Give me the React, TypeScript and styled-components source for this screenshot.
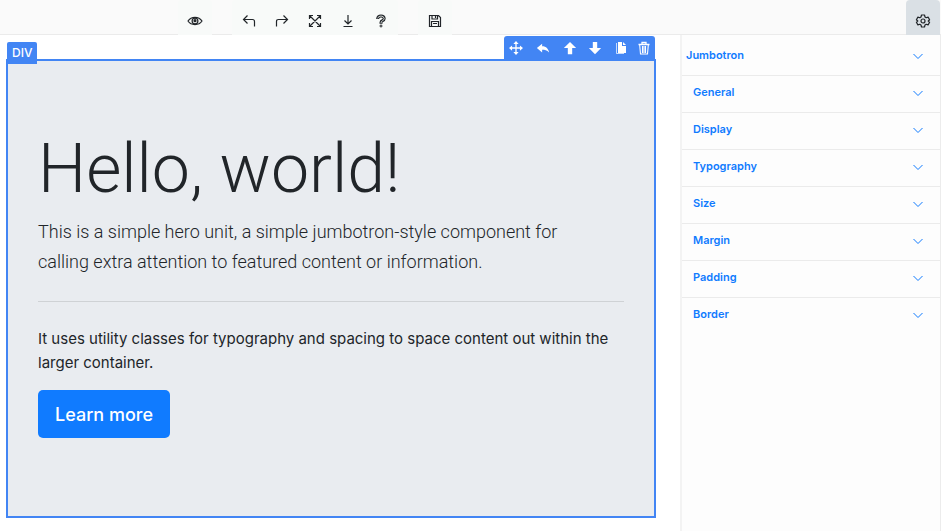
import React from "react";
import styled, { createGlobalStyle } from "styled-components";

const Global = createGlobalStyle`
  * { box-sizing: border-box; }
  body {
    margin: 0;
    background: #fff;
    color: #212529;
    font-family: Inter, "Liberation Sans", sans-serif;
    font-size: 16px;
    line-height: 24px;
  }
  button { font-family: inherit; border: 0; padding: 0; cursor: pointer; }
  h1, h2, p { margin: 0; }
`;

const Page = styled.div`
  display: flex;
  flex-direction: column;
  min-height: 100vh;
  padding-right: 3px;
`;

const TopBar = styled.header`
  display: flex;
  gap: 20px;
  height: 35px;
  padding-left: 178px;
  background: #fafafa;
  box-shadow: inset 0 -1px #ebebeb;
`;

const ToolGroup = styled.div`
  display: flex;
  padding-right: 1px;
  background: #f8faf9;
  border-radius: 4px 4px 0 0;
`;

const ToolButton = styled.button<{ $active?: boolean }>`
  display: flex;
  justify-content: center;
  width: ${(p) => (p.$active ? 34 : 33)}px;
  height: 35px;
  padding-top: 13px;
  color: #212529;
  background: ${(p) => (p.$active ? "#dae0e5" : "transparent")};
  border-radius: 4px 4px 0 0;
`;

const EndSlot = styled.div`
  margin-left: auto;
  padding-right: 1px;
`;

const Icon = styled.svg<{ $size?: number }>`
  display: block;
  flex: none;
  width: ${(p) => p.$size ?? 16}px;
  height: ${(p) => p.$size ?? 16}px;
  fill: none;
  stroke: currentColor;
`;

const Body = styled.main`
  display: flex;
  flex: 1;
`;

const Canvas = styled.section`
  flex: 1;
  min-width: 0;
  padding: 24px 24px 13px 6px;
`;

const Selection = styled.div`
  position: relative;
  border: 2px solid #4285f4;
`;

const ElementTag = styled.span`
  position: absolute;
  left: -1px;
  top: -19px;
  height: 22px;
  padding: 0 5px;
  background: #4285f4;
  border-radius: 2px 2px 0 0;
  color: #fff;
  font-size: 12px;
  font-weight: 500;
  line-height: 22px;
`;

const ActionBar = styled.div`
  position: absolute;
  right: -1px;
  top: -25px;
  display: flex;
  height: 25px;
  background: #4285f4;
  border-radius: 3px 3px 0 0;
`;

const ActionButton = styled.button<{ $width: number }>`
  display: flex;
  align-items: center;
  justify-content: center;
  width: ${(p) => p.$width}px;
  padding-bottom: 1px;
  background: transparent;
  color: #fff;
`;

const Jumbotron = styled.div`
  padding: 62px 30px 78px;
  background: #e9ecf0;
`;

const Title = styled.h1`
  margin-bottom: 2px;
  font-family: Roboto, Inter, sans-serif;
  font-size: 68px;
  font-weight: 350;
  line-height: 92px;
`;

const Lead = styled.p`
  font-family: Roboto, Inter, sans-serif;
  font-size: 18px;
  font-weight: 300;
  line-height: 30px;
`;

const Divider = styled.hr`
  height: 1px;
  margin: 24px 0 25px;
  border: 0;
  background: #cfd2d5;
`;

const Copy = styled.p`
  margin-bottom: 15px;
  font-size: 15px;
`;

const LearnMore = styled.a`
  display: inline-block;
  padding: 10px 17px 8px;
  border-radius: 5px;
  background: #107bff;
  color: #fff;
  font-size: 18px;
  font-weight: 500;
  line-height: 30px;
  text-decoration: none;
  vertical-align: top;
`;

const Panel = styled.aside`
  width: 261px;
  border-left: 2px solid #f3f3f3;
  border-right: 1px solid #ececec;
  background: #fdfdfd;
`;

const Section = styled.h2<{ $nested?: boolean }>`
  padding-left: ${(p) => (p.$nested ? 11 : 4)}px;
  border-bottom: 1px solid #ebebeb;
  font-size: 11px;
  line-height: 16px;

  &:last-child { border-bottom: 0; }
`;

const SectionToggle = styled.button<{ $nested?: boolean }>`
  display: flex;
  align-items: center;
  justify-content: space-between;
  width: 100%;
  height: ${(p) => (p.$nested ? 36 : 40)}px;
  padding: 0 16px ${(p) => (p.$nested ? 4 : 0)}px 0;
  background: transparent;
  color: #107bff;
  font-size: 11px;
  font-weight: 600;
  line-height: 16px;

  svg { margin-top: 2px; }
`;

const EyeIcon = () => (
  <Icon viewBox="0 0 16 16" strokeWidth="1.2">
    <path d="M1 8C4.300 3.200 11.700 3.200 15 8C11.700 12.800 4.300 12.800 1 8Z" />
    <circle cx="8" cy="8" r="2.900" />
    <circle cx="8" cy="7.700" r="1" fill="currentColor" />
  </Icon>
);
const UndoIcon = () => (
  <Icon viewBox="0 0 16 16" strokeWidth="1.200">
    <path d="M6.500 2.500L2.500 6.500L6.500 10.500M2.500 6.500H11.500Q13.500 6.500 13.500 8.500V13.500" />
  </Icon>
);
const RedoIcon = () => (
  <Icon viewBox="0 0 16 16" strokeWidth="1.200">
    <path d="M9.500 2.500L13.500 6.500L9.500 10.500M13.500 6.500H4.500Q2.500 6.500 2.500 8.500V13.500" />
  </Icon>
);
const ExpandIcon = () => (
  <Icon viewBox="0 0 16 16" strokeWidth="1.200">
    <path d="M2.500 6V2.500H6M10 2.500H13.500V6M13.500 10V13.500H10M6 13.500H2.500V10M2.500 2.500L13.500 13.500M13.500 2.500L2.500 13.500" />
  </Icon>
);
const DownloadIcon = () => (
  <Icon viewBox="0 0 16 16" strokeWidth="1.200">
    <path d="M8 2V11M4.500 7.500L8 11L11.500 7.500M3.500 13.500H12.500" />
  </Icon>
);
const HelpIcon = () => (
  <Icon viewBox="0 0 16 16">
    <path d="M4.700 6V5.500Q5 3 8 3T11.200 5.500Q11.200 6.900 9.500 7.700Q8 8.400 8 9.500V10.800" strokeWidth="3" />
    <path d="M4.700 5.400Q5.200 3 8 3T11.200 5.500Q11.200 6.900 9.500 7.700Q8 8.400 8 10" stroke="#f8faf9" strokeWidth="0.800" />
    <circle cx="8" cy="13" r="1" strokeWidth="1" />
  </Icon>
);
const SaveIcon = () => (
  <Icon viewBox="0 0 16 16" strokeWidth="1.200">
    <path d="M2.500 2.500H11.500L13.500 4.500V13.500H2.500ZM5 2.500V6H10.500V2.500M4.500 13.500V8.500H11.500V13.500M8.500 3V5M6 10.500H10" />
  </Icon>
);
const GearIcon = () => (
  <Icon viewBox="0 0 16 16" strokeWidth="1.200" strokeLinejoin="round">
    <path d="M6.500 2H9.500L10 4L11.200 4.700L13.100 4.100L14.600 6.700L13.200 8L14.600 9.300L13.100 11.900L11.200 11.300L10 12L9.500 14H6.500L6 12L4.800 11.300L2.900 11.900L1.400 9.300L2.800 8L1.400 6.700L2.900 4.100L4.800 4.700L6 4Z" />
    <circle cx="8" cy="8" r="2" />
  </Icon>
);

const MoveIcon = () => (
  <Icon viewBox="0 0 16 16" $size={14} strokeWidth="1.500">
    <path d="M8 2V14M2 8H14" />
    <path d="M8 0L11 3.500H5ZM8 16L5 12.500H11ZM0 8L3.500 5V11ZM16 8L12.500 11V5Z" fill="currentColor" stroke="none" />
  </Icon>
);
const ReplyIcon = () => (
  <Icon viewBox="0 0 16 16" $size={14}>
    <path d="M7 3V6C12 6 14 9 15 13C12.500 10.500 10 10 7 10V13L1 8Z" fill="currentColor" stroke="none" />
  </Icon>
);
const UpIcon = () => (
  <Icon viewBox="0 0 16 16" $size={14}>
    <path d="M8 1L15 8H10.500V15H5.500V8H1Z" fill="currentColor" stroke="none" />
  </Icon>
);
const DownIcon = () => (
  <Icon viewBox="0 0 16 16" $size={14}>
    <path d="M8 15L15 8H10.500V1H5.500V8H1Z" fill="currentColor" stroke="none" />
  </Icon>
);
const CopyIcon = () => (
  <Icon viewBox="0 0 14 14" $size={14}>
    <path d="M4 1H8V5H12V12H4Z" fill="currentColor" stroke="none" />
    <path d="M9 1L12 4H9Z" fill="currentColor" stroke="none" />
    <path d="M2.500 2V12.500H10" strokeWidth="1" opacity="0.700" />
  </Icon>
);
const TrashIcon = () => (
  <Icon viewBox="0 0 14 14" $size={14}>
    <path d="M1.500 3.500H12.500M5 3V1.500H9V3" strokeWidth="1.300" />
    <path d="M2.700 4L3.500 13H10.500L11.300 4M5.500 5V12M7 5V12M8.500 5V12" strokeWidth="1.100" />
  </Icon>
);
const ChevronIcon = () => (
  <Icon viewBox="0 0 12 12" $size={12} strokeWidth="1">
    <path d="M1.500 4L6 8.500L10.500 4" />
  </Icon>
);

const toolGroups = [
  [{ label: "Preview", Glyph: EyeIcon }],
  [
    { label: "Undo", Glyph: UndoIcon },
    { label: "Redo", Glyph: RedoIcon },
    { label: "Fullscreen", Glyph: ExpandIcon },
    { label: "Download", Glyph: DownloadIcon },
    { label: "Help", Glyph: HelpIcon },
  ],
  [{ label: "Save", Glyph: SaveIcon }],
];

const actions = [
  { label: "Move", Glyph: MoveIcon, width: 24 },
  { label: "Select parent", Glyph: ReplyIcon, width: 29 },
  { label: "Move up", Glyph: UpIcon, width: 25 },
  { label: "Move down", Glyph: DownIcon, width: 26 },
  { label: "Clone", Glyph: CopyIcon, width: 25 },
  { label: "Delete", Glyph: TrashIcon, width: 22 },
];

const sections = ["General", "Display", "Typography", "Size", "Margin", "Padding", "Border"];

export default function App() {
  return (
    <Page>
      <Global />
      <TopBar>
        {toolGroups.map((group) => (
          <ToolGroup key={group[0].label}>
            {group.map(({ label, Glyph }) => (
              <ToolButton key={label} type="button" aria-label={label}>
                <Glyph />
              </ToolButton>
            ))}
          </ToolGroup>
        ))}
        <EndSlot>
          <ToolButton type="button" aria-label="Settings" $active>
            <GearIcon />
          </ToolButton>
        </EndSlot>
      </TopBar>
      <Body>
        <Canvas>
          <Selection>
            <ElementTag>DIV</ElementTag>
            <ActionBar>
              {actions.map(({ label, Glyph, width }) => (
                <ActionButton key={label} type="button" aria-label={label} $width={width}>
                  <Glyph />
                </ActionButton>
              ))}
            </ActionBar>
            <Jumbotron>
              <Title>Hello, world!</Title>
              <Lead>
                This is a simple hero unit, a simple jumbotron-style component for
                <br />
                calling extra attention to featured content or information.
              </Lead>
              <Divider />
              <Copy>
                It uses utility classes for typography and spacing to space content out within the
                larger container.
              </Copy>
              <LearnMore href="#">Learn more</LearnMore>
            </Jumbotron>
          </Selection>
        </Canvas>
        <Panel>
          <Section>
            <SectionToggle type="button">
              Jumbotron
              <ChevronIcon />
            </SectionToggle>
          </Section>
          {sections.map((name) => (
            <Section key={name} $nested>
              <SectionToggle type="button" $nested>
                {name}
                <ChevronIcon />
              </SectionToggle>
            </Section>
          ))}
        </Panel>
      </Body>
    </Page>
  );
}
